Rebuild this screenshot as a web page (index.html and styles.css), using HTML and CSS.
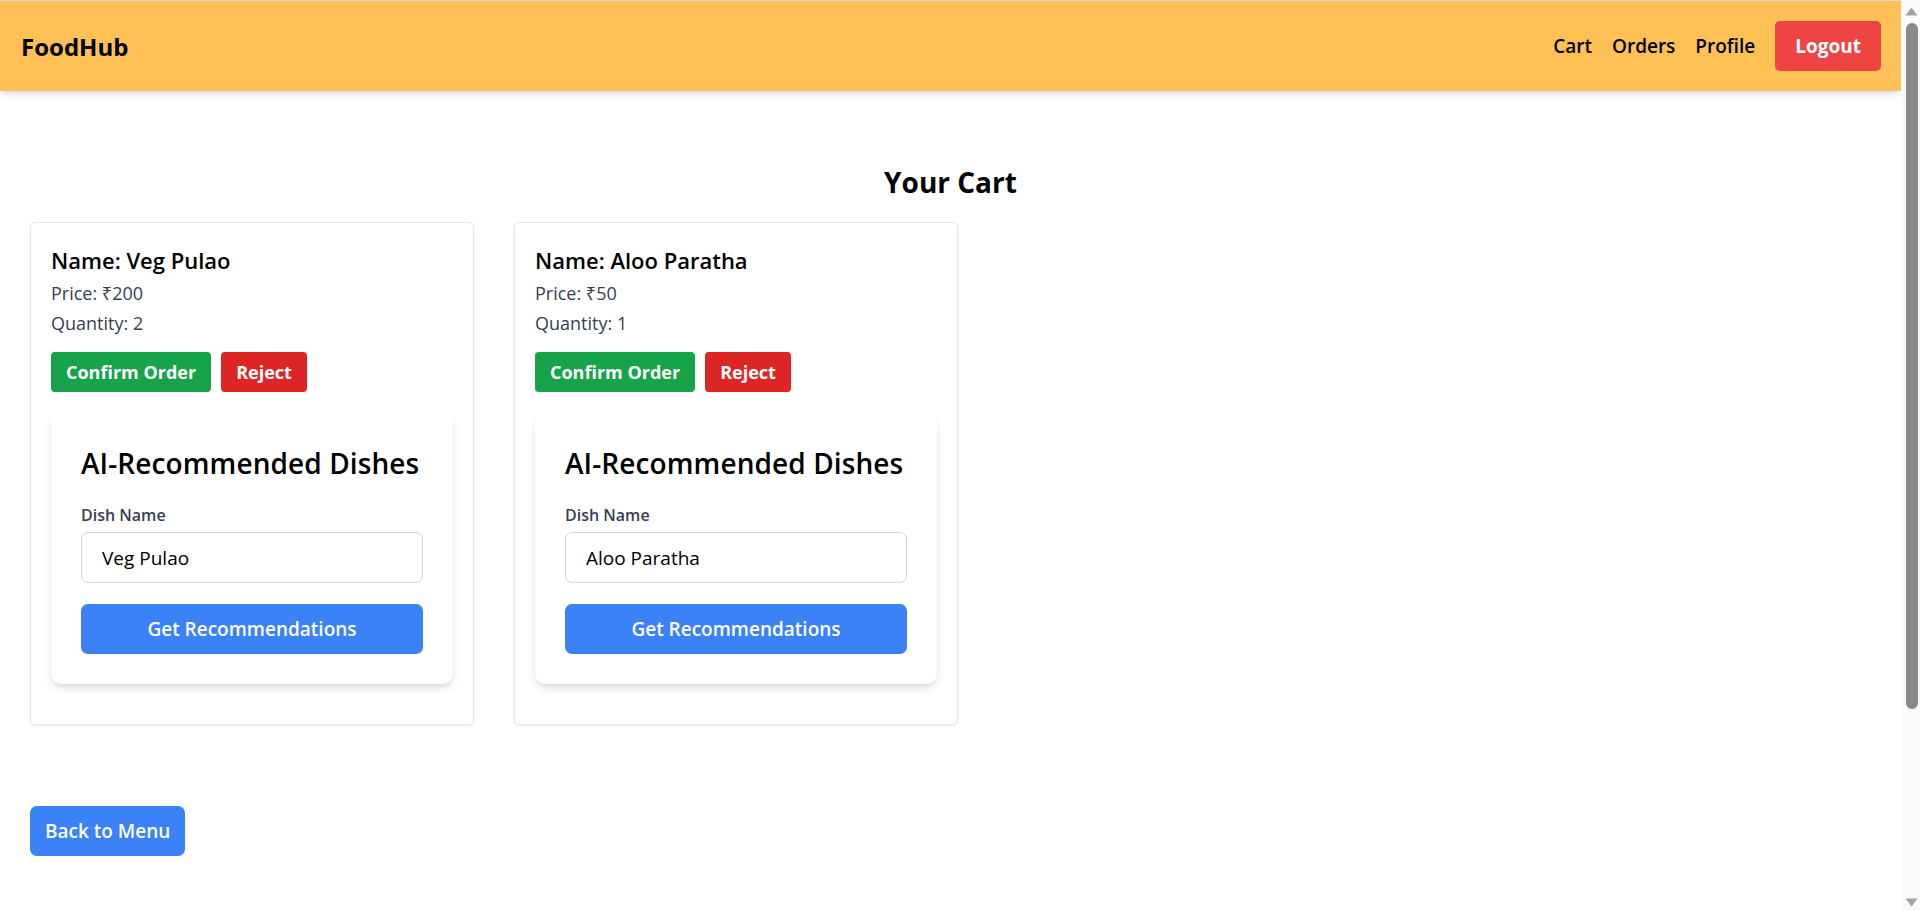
FILE: index.html
```html
<!DOCTYPE html>
<html lang="en">
<head>
<meta charset="utf-8">
<title>FoodHub - Your Cart</title>
<link rel="stylesheet" href="styles.css">
</head>
<body>
<nav class="navbar">
  <div class="brand">FoodHub</div>
  <div class="nav-links">
    <a class="nav-link" href="#">Cart</a>
    <a class="nav-link" href="#">Orders</a>
    <a class="nav-link" href="#">Profile</a>
    <button class="btn btn-logout">Logout</button>
  </div>
</nav>
<main class="page">
  <h2 class="page-title">Your Cart</h2>
  <div class="cart-list">
    <div class="cart-card">
      <h3 class="item-name">Name: Veg Pulao</h3>
      <p class="item-meta">Price: ₹200</p>
      <p class="item-meta">Quantity: 2</p>
      <div class="item-actions">
        <button class="btn btn-confirm">Confirm Order</button>
        <button class="btn btn-reject">Reject</button>
      </div>
      <div class="reco-box">
        <h2 class="reco-title">AI-Recommended Dishes</h2>
        <label class="reco-label">Dish Name</label>
        <input class="reco-input" type="text" value="Veg Pulao">
        <button class="btn btn-reco">Get Recommendations</button>
      </div>
    </div>
    <div class="cart-card">
      <h3 class="item-name">Name: Aloo Paratha</h3>
      <p class="item-meta">Price: ₹50</p>
      <p class="item-meta">Quantity: 1</p>
      <div class="item-actions">
        <button class="btn btn-confirm">Confirm Order</button>
        <button class="btn btn-reject">Reject</button>
      </div>
      <div class="reco-box">
        <h2 class="reco-title">AI-Recommended Dishes</h2>
        <label class="reco-label">Dish Name</label>
        <input class="reco-input" type="text" value="Aloo Paratha">
        <button class="btn btn-reco">Get Recommendations</button>
      </div>
    </div>
  </div>
  <button class="btn btn-back">Back to Menu</button>
</main>
<div class="scrollbar" aria-hidden="true">
  <svg class="sb-arrow" width="13" height="9" viewBox="0 0 13 9"><path d="M6.5 0.5 L12.5 8.5 L0.5 8.5 Z" fill="#a3a3a3"/></svg>
  <div class="sb-track"><div class="sb-thumb"></div></div>
  <svg class="sb-arrow" width="13" height="9" viewBox="0 0 13 9"><path d="M0.5 0.5 L12.5 0.5 L6.5 8.5 Z" fill="#a3a3a3"/></svg>
</div>
</body>
</html>
```
FILE: styles.css
```css
* { box-sizing: border-box; }
html, body { margin: 0; padding: 0; }
body {
  font-family: "Open Sans", "Noto Sans", sans-serif;
  color: #000;
  background: #fff;
  border-top: 1px solid #d4d4d4;
  margin-right: 19px;
}
.navbar {
  display: flex;
  align-items: center;
  justify-content: space-between;
  padding: 20px 20px 20px 21px;
  background: #ffc155;
  box-shadow: 0 5px 8px -2px rgba(0,0,0,0.12), 0 2px 4px -2px rgba(0,0,0,0.1);
  position: relative;
}
.brand { font-size: 24px; font-weight: 700; }
.nav-links { display: flex; align-items: center; gap: 20px; }
.nav-link { color: #000; text-decoration: none; font-size: 19px; font-weight: 600; }
.btn {
  font-family: inherit;
  border: none;
  color: #fff;
  cursor: pointer;
  font-weight: 700;
}
.btn-logout {
  background: #ef4444;
  height: 50px;
  padding: 0 20px;
  font-size: 19px;
  border-radius: 5px;
}
.page { padding: 0 30px 300px; }
.page-title {
  margin: 71px 0 20px;
  text-align: center;
  font-size: 28px;
  line-height: 40px;
  font-weight: 700;
}
.cart-list { display: flex; flex-wrap: wrap; gap: 40px; align-items: flex-start; }
.cart-card {
  border: 1px solid #e5e7eb;
  border-radius: 5px;
  box-shadow: 0 1px 3px rgba(0,0,0,0.08);
  padding: 20px;
}
.item-name { margin: 0; font-size: 22px; line-height: 35px; font-weight: 600; }
.item-meta { margin: 0; font-size: 18px; line-height: 30px; color: #374151; }
.item-actions { display: flex; gap: 10px; margin-top: 14px; }
.btn-confirm, .btn-reject {
  height: 40px;
  padding: 0 15px;
  font-size: 18px;
  border-radius: 4px;
}
.btn-confirm { background: #16a34a; }
.btn-reject { background: #dc2626; }
.reco-box {
  width: 402px;
  margin: 21px 0 20px;
  padding: 30px;
  border-radius: 10px;
  background: #fff;
  box-shadow: 0 5px 8px -1px rgba(0,0,0,0.12), 0 2px 4px -2px rgba(0,0,0,0.08);
  display: flex;
  flex-direction: column;
}
.reco-title {
  margin: 0 0 20px;
  font-size: 28px;
  line-height: 40px;
  font-weight: 600;
  white-space: nowrap;
  letter-spacing: 0.1px;
}
.reco-label { font-size: 16px; line-height: 25px; font-weight: 600; color: #374151; }
.reco-input {
  margin-top: 4px;
  height: 51px;
  padding: 0 20px;
  font-family: inherit;
  font-size: 19px;
  color: #000;
  border: 1px solid #d1d5db;
  border-radius: 7px;
}
.btn-reco {
  margin-top: 21px;
  height: 50px;
  font-size: 19px;
  border-radius: 7px;
  background: #3b82f6;
  font-weight: 600;
}
.btn-back {
  margin-top: 81px;
  height: 50px;
  padding: 0 15px;
  font-size: 19px;
  border-radius: 7px;
  background: #3b82f6;
  font-weight: 600;
}
.scrollbar {
  position: fixed;
  top: 0;
  right: 0;
  width: 19px;
  height: 100vh;
  background: #fafafa;
  display: flex;
  flex-direction: column;
  align-items: center;
  padding: 7px 0 3px;
  gap: 7px;
}
.sb-arrow { display: block; flex: none; margin-left: 2px; }
.sb-track { flex: 1; width: 100%; display: flex; justify-content: center; }
.sb-thumb {
  width: 12px;
  height: 686px;
  margin-left: 3px;
  border-radius: 6px;
  background: #8a8a8a;
}
```
